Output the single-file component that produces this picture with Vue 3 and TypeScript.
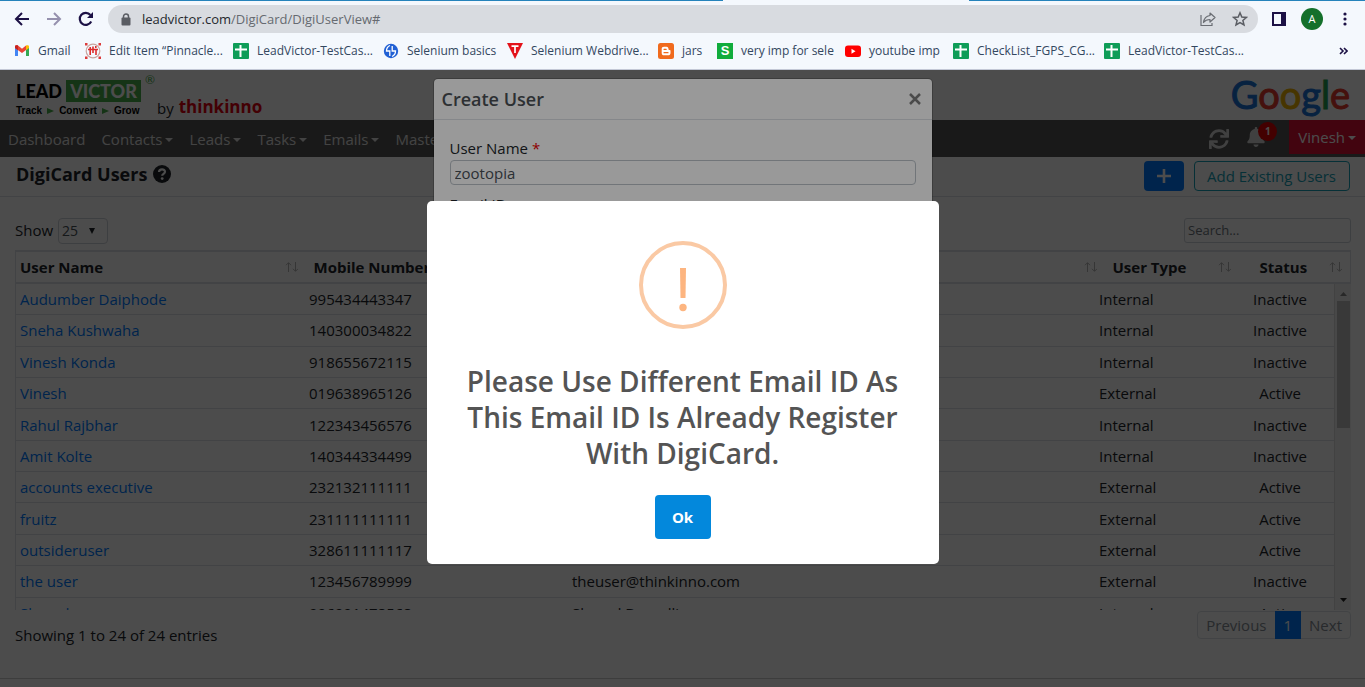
<script setup lang="ts">
import { ref } from 'vue'

interface Bookmark { label: string; icon: string }
interface User { name: string; mobile: string; email: string; type: string; status: string }

const bookmarks: Bookmark[] = [
  { label: 'Gmail', icon: 'gmail' },
  { label: 'Edit Item “Pinnacle...', icon: 'pinnacle' },
  { label: 'LeadVictor-TestCas...', icon: 'sheet' },
  { label: 'Selenium basics', icon: 'globe' },
  { label: 'Selenium Webdrive...', icon: 'triangle' },
  { label: 'jars', icon: 'blogger' },
  { label: 'very imp for sele', icon: 'square' },
  { label: 'youtube imp', icon: 'youtube' },
  { label: 'CheckList_FGPS_CG...', icon: 'sheet' },
  { label: 'LeadVictor-TestCas...', icon: 'sheet' },
]

const menus: string[] = ['Contacts', 'Leads', 'Tasks', 'Emails', 'Masters']

const users: User[] = [
  { name: 'Audumber Daiphode', mobile: '995434443347', email: '', type: 'Internal', status: 'Inactive' },
  { name: 'Sneha Kushwaha', mobile: '140300034822', email: '', type: 'Internal', status: 'Inactive' },
  { name: 'Vinesh Konda', mobile: '918655672115', email: '', type: 'Internal', status: 'Inactive' },
  { name: 'Vinesh', mobile: '019638965126', email: '', type: 'External', status: 'Active' },
  { name: 'Rahul Rajbhar', mobile: '122343456576', email: '', type: 'Internal', status: 'Inactive' },
  { name: 'Amit Kolte', mobile: '140344334499', email: '', type: 'Internal', status: 'Inactive' },
  { name: 'accounts executive', mobile: '232132111111', email: '', type: 'External', status: 'Active' },
  { name: 'fruitz', mobile: '231111111111', email: '', type: 'External', status: 'Active' },
  { name: 'outsideruser', mobile: '328611111117', email: '', type: 'External', status: 'Active' },
  { name: 'the user', mobile: '123456789999', email: 'theuser@thinkinno.com', type: 'External', status: 'Inactive' },
  { name: 'Sharad', mobile: '996991478568', email: 'Sharad Borpalli', type: 'Internal', status: 'Active' },
]

const pageSize = ref('25')
const search = ref('')
const userName = ref('zootopia')
</script>

<template>
  <div class="window">
    <header class="chrome">
      <div class="tab-edge"><span class="tab-gap"></span></div>
      <div class="toolbar">
        <button class="tool" aria-label="Back">
          <svg width="16" height="16" viewBox="0 0 16 16" fill="none" stroke="#1c1145" stroke-width="2"><path d="M15 8H2M8 2 2 8l6 6" /></svg>
        </button>
        <button class="tool" aria-label="Forward">
          <svg width="16" height="16" viewBox="0 0 16 16" fill="none" stroke="#9591ae" stroke-width="2"><path d="M1 8h13M8 2l6 6-6 6" /></svg>
        </button>
        <button class="tool" aria-label="Reload">
          <svg width="16" height="16" viewBox="0 0 16 16"><path d="M13.2 10.5A6 6 0 1 1 12.4 4" fill="none" stroke="#1c1145" stroke-width="2.2" /><path d="M15 1v6H9z" fill="#1c1145" /></svg>
        </button>
        <div class="omnibox">
          <svg width="10" height="13" viewBox="0 0 10 13"><path d="M2.5 5V3.5a2.5 2.5 0 0 1 5 0V5" fill="none" stroke="#5a5d63" stroke-width="1.5" /><rect x="0.5" y="4.5" width="9" height="8" rx="1" fill="#5a5d63" /></svg>
          <span class="url">leadvictor.com<span class="path">/DigiCard/DigiUserView#</span></span>
          <svg width="16" height="16" viewBox="0 0 16 16" fill="none" stroke="#6a6d73" stroke-width="1.2"><path d="M1 4v10.500h11V12" /><path d="M10 2l5 4.500-5 4.500V8.500C7 8.500 5 9.500 3.500 11.500 4 7.500 6 5 10 4.500z" stroke-linejoin="round" /></svg>
          <svg width="16" height="16" viewBox="0 0 16 16" fill="none" stroke="#5a5d63" stroke-width="1.500"><path d="M8 1.800l1.800 4.200 4.600.4-3.500 3 1.100 4.500L8 11.500l-4 2.400 1.100-4.500-3.500-3L6.200 6z" /></svg>
        </div>
        <button class="tool" aria-label="Side panel">
          <svg width="14" height="14" viewBox="0 0 14 14"><rect x="1" y="1" width="12" height="12" fill="none" stroke="#1c1145" stroke-width="2" /><path d="M9 0h5v14H9z" fill="#1c1145" /></svg>
        </button>
        <button class="avatar">A</button>
        <button class="tool kebab" aria-label="Menu">
          <svg width="4" height="14" viewBox="0 0 4 14" fill="#1c1145"><circle cx="2" cy="2" r="1.600" /><circle cx="2" cy="7" r="1.600" /><circle cx="2" cy="12" r="1.600" /></svg>
        </button>
      </div>
      <nav class="bookmarks">
        <a v-for="(b, i) in bookmarks" :key="i" href="#" class="bookmark">
          <svg v-if="b.icon === 'gmail'" width="16" height="16" viewBox="0 0 16 16"><path d="M1 3.500v9.500h3V6z" fill="#4285f4" /><path d="M15 3.500v9.500h-3V6z" fill="#34a853" /><path d="M1 3.500C1 2 3 1.800 4 2.600L8 5.800l4-3.200V7L8 10 1 5z" fill="#ea4335" /><path d="M12 2.600c1-.8 3-.6 3 .9V5l-3 2.200z" fill="#fbbc04" /><path d="M1 3.500V5l3 2.200V2.600C3 1.800 1 2 1 3.500z" fill="#c5221f" /></svg>
          <svg v-else-if="b.icon === 'pinnacle'" width="16" height="16" viewBox="0 0 16 16" fill="none"><path d="M0 0h2.500v2.500H0zM13.500 0H16v2.500h-2.500zM0 13.500h2.500V16H0zM13.500 13.500H16V16h-2.500z" fill="#dc3b3b" /><circle cx="8" cy="8" r="6.800" stroke="#c9a59f" stroke-width="1.200" /><path d="M3 6.500h10M5.200 4v8M8 3.500V10M8 6.500h3V12M10.800 3v2" stroke="#dc2b2b" stroke-width="1.600" /></svg>
          <svg v-else-if="b.icon === 'sheet'" width="16" height="16" viewBox="0 0 16 16"><rect width="16" height="16" rx="1" fill="#0f9d58" /><path d="M2 6.500h12M7.500 2v12" stroke="#fff" stroke-width="2" /></svg>
          <svg v-else-if="b.icon === 'globe'" width="16" height="16" viewBox="0 0 16 16" fill="none"><circle cx="8" cy="8" r="7.200" fill="#2160d4" /><path d="M7 2.500C3.500 4 3.500 7 3.500 8h3.300v5M9 13.500c3.500-1.500 3.500-4.500 3.500-5.500H9.200V3" stroke="#fff" stroke-width="1.300" /></svg>
          <svg v-else-if="b.icon === 'triangle'" width="16" height="16" viewBox="0 0 16 16"><path d="M0 0h16L8 16z" fill="#e3131b" /><path d="M4.500 3.200h7M8 3.200V10" stroke="#fff" stroke-width="1.700" /></svg>
          <svg v-else-if="b.icon === 'blogger'" width="16" height="16" viewBox="0 0 16 16" fill="none"><rect width="16" height="16" rx="2.500" fill="#f06a1d" /><path d="M6 3.700h2.500c1.400 0 2 1 2 2.300 0 .8.300 1 1 1 .8 0 1 .4 1 1V10c0 1.500-1 2.300-2.300 2.300H6c-1.500 0-2.300-.8-2.300-2.300V6C3.700 4.500 4.500 3.700 6 3.700z" fill="#fff" /><path d="M6 6.300h2.200M6 9.700h4" stroke="#f06a1d" stroke-width="1.200" stroke-linecap="round" /></svg>
          <span v-else-if="b.icon === 'square'" class="s-icon">S</span>
          <svg v-else width="16" height="16" viewBox="0 0 16 16"><rect y="2.500" width="16" height="11.500" rx="3" fill="#f00" /><path d="M6.500 5.800v5l4-2.500z" fill="#fff" /></svg>
          <span>{{ b.label }}</span>
        </a>
        <button class="more" aria-label="More bookmarks">
          <svg width="9" height="8" viewBox="0 0 9 8" fill="none" stroke="#1c1145" stroke-width="1.600"><path d="M1 1l3 3-3 3M5 1l3 3-3 3" /></svg>
        </button>
      </nav>
    </header>

    <div class="app">
      <div class="brand-row">
        <div class="brand">
          <div class="lead">
            <div class="lead-top"><b>LEAD</b><b class="victor">VICTOR</b><span class="reg">®</span></div>
            <div class="tagline">Track<i></i>Convert<i></i>Grow</div>
          </div>
          <span class="by">by</span>
          <b class="thinkinno">thinkinno</b>
        </div>
        <div class="google"><span class="b">G</span><span class="r">o</span><span class="y">o</span><span class="b">g</span><span class="g">l</span><span class="r">e</span></div>
      </div>

      <nav class="navbar">
        <a href="#">Dashboard</a>
        <a v-for="m in menus" :key="m" href="#" class="dropdown">{{ m }}</a>
        <div class="nav-right">
          <button class="icon-btn" aria-label="Refresh">
            <svg width="20" height="20" viewBox="0 0 512 512" fill="#d8d8d8"><path d="M440.650 12.570l4 82.770A247.160 247.160 0 0 0 255.830 8C134.730 8 33.910 94.920 12.290 209.820A12 12 0 0 0 24.090 224h49.050a12 12 0 0 0 11.670-9.260 175.910 175.910 0 0 1 317-56.940l-101.460-4.860a12 12 0 0 0-12.570 12v47.410a12 12 0 0 0 12 12H500a12 12 0 0 0 12-12V12a12 12 0 0 0-12-12h-47.370a12 12 0 0 0-11.980 12.570zM255.830 432a175.610 175.610 0 0 1-146-77.800l101.800 4.870a12 12 0 0 0 12.570-12v-47.400a12 12 0 0 0-12-12H12a12 12 0 0 0-12 12V500a12 12 0 0 0 12 12h47.350a12 12 0 0 0 12-12.600l-4.150-82.570A247.170 247.170 0 0 0 255.830 504c121.110 0 221.930-86.920 243.550-201.820a12 12 0 0 0-11.800-14.180h-49.050a12 12 0 0 0-11.670 9.260A175.860 175.860 0 0 1 255.830 432z" /></svg>
          </button>
          <button class="icon-btn bell" aria-label="Notifications">
            <svg width="18" height="20" viewBox="0 0 448 512" fill="#d8d8d8"><path d="M224 512c35.300 0 63.900-28.700 63.900-64H160.100c0 35.300 28.600 64 63.900 64zm215.400-149.700c-19.300-20.800-55.500-52-55.500-154.300 0-77.700-54.500-139.900-127.900-155.200V32c0-17.700-14.300-32-32-32s-32 14.300-32 32v20.800C118.600 68.100 64.100 130.300 64.100 208c0 102.300-36.200 133.500-55.500 154.300-6 6.500-8.700 14.200-8.600 21.700.1 16.400 13 32 32.100 32h383.800c19.100 0 32-15.600 32.100-32 .1-7.500-2.600-15.200-8.500-21.700z" /></svg>
            <span class="badge">1</span>
          </button>
          <button class="account dropdown">Vinesh</button>
        </div>
      </nav>

      <div class="title-row">
        <h1>DigiCard Users</h1>
        <svg class="help" width="18" height="18" viewBox="0 0 18 18"><circle cx="9" cy="9" r="9" fill="#212529" /><path d="M6 7c.2-3.500 6-3.300 6-.3 0 2.200-2.800 2-2.800 4.100" fill="none" stroke="#fff" stroke-width="2.200" /><circle cx="9.200" cy="13.600" r="1.400" fill="#fff" /></svg>
        <button class="add" aria-label="Add user">
          <svg width="14" height="14" viewBox="0 0 14 14"><path d="M7 0v14M0 7h14" stroke="#fff" stroke-width="2.600" /></svg>
        </button>
        <button class="add-existing">Add Existing Users</button>
      </div>

      <main>
        <div class="filters">
          <label for="page-size">Show</label>
          <span class="select-wrap">
            <select id="page-size" v-model="pageSize"><option>25</option></select>
            <svg width="6" height="6" viewBox="0 0 6 6"><path d="M0 0h6L3 6z" fill="#212529" /></svg>
          </span>
          <input v-model="search" class="search" type="text" placeholder="Search..." aria-label="Search" />
        </div>

        <div class="grid-box">
          <table class="head">
            <colgroup><col class="h-name" /><col class="h-mobile" /><col /><col class="h-type" /><col class="h-status" /></colgroup>
            <thead>
              <tr>
                <th v-for="h in ['User Name', 'Mobile Number', '', 'User Type', 'Status']" :key="h">
                  <div class="th"><span>{{ h }}</span><svg width="13" height="10" viewBox="0 0 13 10" fill="none" stroke="#b4b4b4"><path d="M3.500 10V.8M1 3.200 3.500.7 6 3.200M10.500 0v9.200M8 6.800l2.500 2.500L13 6.800" /></svg></div>
                </th>
              </tr>
            </thead>
          </table>
          <div class="scroller">
            <div class="rows">
              <table class="body">
                <colgroup><col class="c-name" /><col class="c-mobile" /><col /><col class="c-type" /><col class="c-status" /></colgroup>
                <tbody>
                  <tr v-for="u in users" :key="u.name">
                    <td><a href="#">{{ u.name }}</a></td>
                    <td>{{ u.mobile }}</td>
                    <td>{{ u.email }}</td>
                    <td>{{ u.type }}</td>
                    <td class="center">{{ u.status }}</td>
                  </tr>
                </tbody>
              </table>
            </div>
            <div class="scrollbar">
              <svg width="7" height="4" viewBox="0 0 7 4"><path d="M0 4h7L3.500 0z" fill="#888" /></svg>
              <span class="thumb"></span>
              <svg width="7" height="4" viewBox="0 0 7 4"><path d="M0 0h7L3.500 4z" fill="#222" /></svg>
            </div>
          </div>
        </div>

        <div class="table-foot">
          <span>Showing 1 to 24 of 24 entries</span>
          <div class="pager"><button>Previous</button><button class="current">1</button><button>Next</button></div>
        </div>
      </main>
      <footer></footer>

      <div class="backdrop">
        <section class="form-modal" role="dialog" aria-labelledby="form-title">
          <div class="form-head">
            <h2 id="form-title">Create User</h2>
            <button aria-label="Close">
              <svg width="12" height="12" viewBox="0 0 12 12"><path d="M1 1l10 10M11 1 1 11" stroke="#7d7d7d" stroke-width="2.500" /></svg>
            </button>
          </div>
          <div class="form-body">
            <label for="user-name">User Name <em>*</em></label>
            <input id="user-name" v-model="userName" type="text" />
            <span class="next">Email ID</span>
          </div>
        </section>
      </div>

      <div class="alert-layer">
        <section class="alert" role="alertdialog" aria-labelledby="alert-title">
          <svg width="88" height="88" viewBox="0 0 88 88"><circle cx="44" cy="44" r="42" fill="none" stroke="#fac9a4" stroke-width="4" /><path d="M41 27h6l-.5 30h-5z" fill="#fdb580" /><circle cx="44" cy="66.500" r="3.700" fill="#fdb580" /></svg>
          <h2 id="alert-title">Please Use Different Email ID As This Email ID Is Already Register With DigiCard.</h2>
          <button>Ok</button>
        </section>
      </div>
    </div>
  </div>
</template>

<style>
body { margin: 0; overflow: hidden; }
</style>

<style scoped>
* { box-sizing: border-box; }
.window { display: flex; flex-direction: column; height: 100vh; font-family: "Open Sans", "Noto Sans", sans-serif; font-size: 15px; line-height: 24px; color: #212529; }
button, input, select { font: inherit; color: inherit; margin: 0; padding: 0; border: 0; background: none; }
h1, h2 { margin: 0; }
a { text-decoration: none; }
svg { flex: none; display: block; }

.chrome { flex: none; height: 70px; background: #f4f8fd; border-bottom: 1px solid #c3c8d6; }
.tab-edge { height: 1px; background: #2583bb; display: flex; }
.tab-gap { margin-left: 53%; width: 18%; background: #f4f8fd; }
.toolbar { display: flex; align-items: center; height: 36px; padding: 0 18px 0 14px; }
.tool { width: 16px; margin-right: 16px; }
.omnibox { flex: 1; height: 28px; margin: 0 14px 0 -2px; padding: 0 10px 0 13px; border-radius: 14px; background: #d8dbe0; display: flex; align-items: center; gap: 16px; }
.url { flex: 1; margin-left: -5px; font-size: 13px; color: #25282d; }
.path { color: #666a70; }
.avatar { width: 22px; height: 22px; margin: 0 20px 0 -3px; border-radius: 50%; background: #14702b; color: #fff; font-size: 11px; line-height: 22px; }
.kebab { width: 4px; margin: 0; }
.bookmarks { display: grid; grid-template-columns: 71px 148px 150px 124px 151px 59px 128px 108px 151px 1fr auto; align-items: center; height: 28px; padding: 0 17px 0 14px; }
.bookmark { display: flex; align-items: center; gap: 8px; font-size: 12px; line-height: 16px; color: #33475f; white-space: nowrap; }
.s-icon { width: 16px; height: 16px; background: #10ac3c; color: #fff; font: bold 13px/16px "Liberation Sans", sans-serif; text-align: center; }

.app { flex: 1; min-height: 0; position: relative; background: #fff; overflow: hidden; display: flex; flex-direction: column; }
.brand-row { flex: none; height: 50px; padding: 0 15px 0 16px; display: flex; justify-content: space-between; }
.brand { display: flex; align-items: flex-end; }
.lead { height: 50px; padding-top: 10px; }
.lead-top { display: flex; height: 22px; font: bold 18px/22px Lato, sans-serif; color: #000; gap: 4px; }
.lead-top b:first-child { width: 46px; }
.victor { width: 75px; background: #48b04b; color: #fff; text-align: center; }
.reg { width: 10px; margin-top: -6px; color: #48b04b; font-size: 12px; line-height: 12px; font-weight: normal; }
.tagline { display: flex; align-items: center; gap: 5px; font: bold 10px/18px "Liberation Sans", sans-serif; color: #000; }
.tagline i { border-left: 7px solid #48b04b; border-top: 3px solid transparent; border-bottom: 3px solid transparent; }
.by { margin: 0 5px 0 2px; }
.thinkinno { font-size: 17px; line-height: 26px; color: #e3000f; }
.google { font: 38px/48px Lato, sans-serif; -webkit-text-stroke: 1px; }
.google .b { color: #1a73d8; }
.google .r { color: #e63b2e; }
.google .y { color: #eeb200; }
.google .g { color: #1fa050; }

.navbar { flex: none; height: 37px; background: #555; display: flex; align-items: flex-start; padding-left: 8px; gap: 16px; color: #e2e2e2; line-height: 38px; }
.navbar a { color: inherit; }
.dropdown::after { content: ""; display: inline-block; margin-left: 3px; vertical-align: 3px; border-top: 4px solid; border-left: 4px solid transparent; border-right: 4px solid transparent; }
.nav-right { margin-left: auto; display: flex; align-items: flex-start; }
.icon-btn { height: 37px; margin-right: 18px; display: flex; align-items: center; }
.bell { position: relative; margin-right: 24px; padding-bottom: 3px; }
.badge { position: absolute; left: 11px; top: 2px; width: 19px; height: 19px; border-radius: 50%; background: #e00000; color: #fff; font: bold 10px/19px "Open Sans", sans-serif; }
.account { height: 34px; padding: 0 9px; background: #dc1035; color: #fff; line-height: 34px; }

.title-row { flex: none; height: 40px; padding: 0 15px 2px 16px; display: flex; align-items: center; border-bottom: 1px solid #dee2e6; }
h1 { font-size: 18px; line-height: 24px; font-weight: 700; margin-right: 6px; padding-bottom: 4px; }
.help { margin-bottom: 4px; }
.add { width: 40px; height: 30px; margin-left: auto; border-radius: 4px; background: #007bff; display: flex; align-items: center; justify-content: center; }
.add-existing { height: 30px; margin-left: 10px; padding: 0 13px 0 12px; border: 1px solid #17a2b8; border-radius: 4px; color: #17a2b8; line-height: 28px; }

main { padding: 20px 14px 0 15px; }
.filters { display: flex; align-items: center; height: 33px; padding-bottom: 6px; }
.filters label { padding-bottom: 2px; }
.select-wrap { position: relative; margin-left: 5px; }
select { appearance: none; display: block; width: 50px; height: 26px; padding: 0 3px; border: 1px solid #ced4da; border-radius: 4px; font-size: 14px; color: #495057; }
.select-wrap svg { position: absolute; right: 13px; top: 10px; }
.search { margin-left: auto; width: 167px; height: 25px; padding: 0 3px 2px; border: 1px solid #ced4da; border-radius: 3px; font-size: 13px; }
.search::placeholder { color: #6c757d; opacity: 1; }
table { border-collapse: collapse; table-layout: fixed; width: 100%; }
.head { border: 1px solid #dee2e6; border-top: 2px solid #dee2e6; border-bottom: 2px solid #dee2e6; }
.head th { height: 32px; padding: 0 8px 0 4px; text-align: left; }
.th { display: flex; align-items: center; justify-content: space-between; white-space: nowrap; line-height: 24px; }
.head th:nth-child(2) .th, .head th:nth-child(4) .th { padding-left: 4px; }
.head th:nth-child(5) .th { padding-left: 17px; }
.h-name { width: 290px; } .h-mobile { width: 264px; } .h-type { width: 134px; } .h-status { width: 112px; }
.scroller { display: flex; height: 326px; overflow: hidden; }
.rows { flex: 1; overflow: hidden; border-left: 1px solid #dee2e6; }
.body { height: 345px; }
.body td { padding: 0 4px; border-bottom: 1px solid #dee2e6; line-height: 24px; white-space: nowrap; }
.body a { color: #007bff; }
.body .center { text-align: center; }
.c-name { width: 289px; } .c-mobile { width: 263px; } .c-type { width: 131px; } .c-status { width: 108px; }
.scrollbar { width: 17px; padding: 8px 0 8px; background: #f1f1f1; border-left: 1px solid #ddd; display: flex; flex-direction: column; align-items: center; }
.thumb { width: 13px; height: 127px; margin: 5px 0 auto; background: #c1c1c1; }
.table-foot { display: flex; justify-content: space-between; height: 68px; padding-top: 1px; line-height: 48px; }
.pager { display: flex; height: 28px; border: 1px solid #dee2e6; border-radius: 4px; }
.pager button { padding: 0 8px; color: #868e96; line-height: 26px; }
.pager .current { margin: -1px 0; padding: 0 9px; background: #007bff; color: #fff; }
footer { flex: 1; border-top: 1px solid #ccc; background: #fcfafa; }

.backdrop, .alert-layer { position: absolute; inset: 0; display: flex; justify-content: center; align-items: flex-start; }
.backdrop { background: rgba(0, 0, 0, 0.5); padding-top: 9px; }
.form-modal { width: 498px; height: 400px; background: #fff; border-radius: 4px; box-shadow: 0 0 0 1px rgba(0, 0, 0, 0.2); }
.form-head { display: flex; justify-content: space-between; align-items: center; height: 41px; padding: 0 11px 0 8px; border-bottom: 1px solid #dee2e6; }
.form-head h2 { font-size: 18px; line-height: 24px; font-weight: 600; color: #4c5156; }
.form-body { padding: 16px; }
.form-body label { display: block; line-height: 24px; }
.form-body em { color: #e00; font-style: normal; }
.form-body input { display: block; width: 100%; height: 25px; padding: 0 4px; border: 1px solid #bcc3ca; border-radius: 4px; color: #495057; }
.form-body .next { display: block; margin-top: 7px; }
.alert-layer { background: rgba(0, 0, 0, 0.4); padding-top: 131px; }
.alert { width: 512px; padding: 40px 20px 25px; background: #fff; border-radius: 5px; display: flex; flex-direction: column; align-items: center; }
.alert h2 { margin: 34px 0 24px; font-size: 28px; line-height: 36px; font-weight: 600; text-align: center; color: #545454; }
.alert button { width: 56px; height: 44px; border-radius: 4px; background: #0388dc; color: #fff; font-weight: 700; }
</style>
